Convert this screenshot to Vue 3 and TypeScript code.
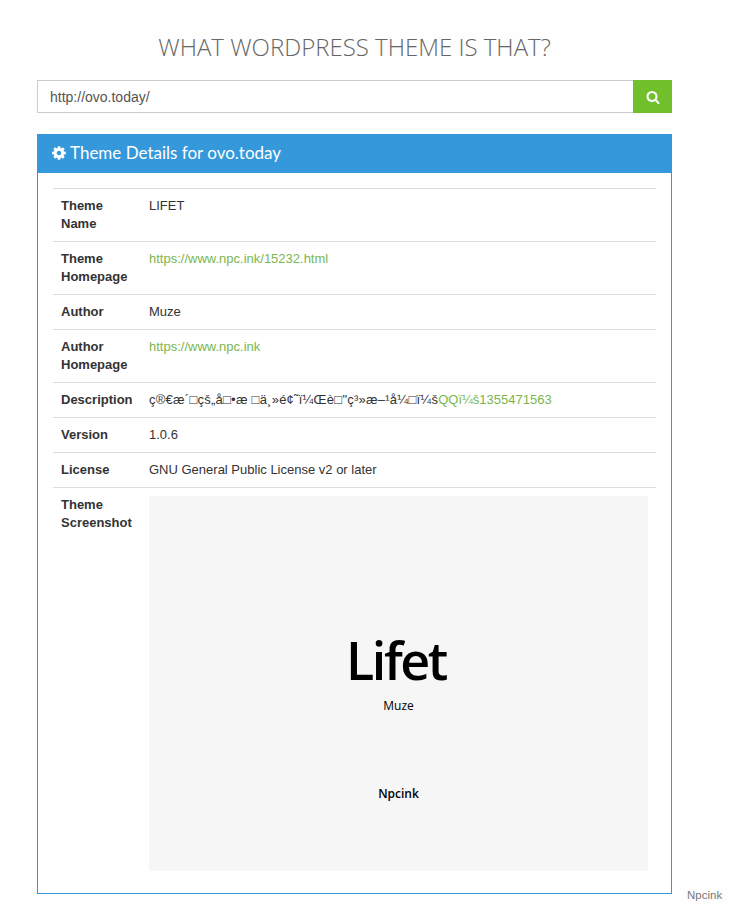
<template>
  <div class="page">
    <h1 class="title">WHAT WORDPRESS THEME IS THAT?</h1>

    <form class="search" @submit.prevent>
      <input v-model="url" class="search-input" type="text" />
      <button class="search-btn" type="submit" aria-label="Search">
        <svg class="search-icon" viewBox="0 0 1792 1792" fill="currentColor">
          <path d="M1216 832q0-185-131.5-316.5t-316.5-131.5-316.5 131.5-131.5 316.5 131.5 316.5 316.5 131.5 316.5-131.5 131.5-316.5zm512 832q0 52-38 90t-90 38q-54 0-90-38l-343-342q-179 124-399 124-143 0-273.5-55.5t-225-150-150-225-55.5-273.5 55.5-273.5 150-225 225-150 273.5-55.5 273.5 55.5 225 150 150 225 55.5 273.5q0 220-124 399l343 343q37 37 37 90z" />
        </svg>
      </button>
    </form>

    <section class="panel">
      <header class="panel-head">
        <svg class="gear" viewBox="0 0 1536 1792" fill="currentColor">
          <path d="M1024 896q0-106-75-181t-181-75-181 75-75 181 75 181 181 75 181-75 75-181zm512-109v222q0 12-8 23t-20 13l-185 28q-19 54-39 91 35 50 107 138 10 12 10 25t-9 23q-27 37-99 108t-94 71q-12 0-26-9l-138-108q-44 23-91 38-16 136-29 186-7 28-36 28h-222q-14 0-24.5-8.5t-11.5-21.5l-28-184q-49-16-90-37l-141 107q-10 9-25 9-14 0-25-11-126-114-165-168-7-10-7-23 0-12 8-23 15-21 51-66.5t54-70.5q-27-50-41-99l-183-27q-13-2-21-12.5t-8-23.5v-222q0-12 8-23t19-13l186-28q14-46 39-92-40-57-107-138-10-12-10-24 0-10 9-23 26-36 98.5-107.5t94.5-71.5q13 0 26 10l138 107q44-23 91-38 16-136 29-186 7-28 36-28h222q14 0 24.5 8.5t11.5 21.5l28 184q49 16 90 37l142-107q9-9 24-9 13 0 25 10 129 119 165 170 7 8 7 22 0 12-8 23-15 21-51 66.5t-54 70.5q26 50 41 98l183 28q13 2 21 12.5t8 23.5z" />
        </svg>
        <span>Theme Details for ovo.today</span>
      </header>

      <div class="panel-body">
        <table class="details">
          <tbody>
            <tr>
              <th>Theme Name</th>
              <td>LIFET</td>
            </tr>
            <tr>
              <th>Theme Homepage</th>
              <td><a href="#">https://www.npc.ink/15232.html</a></td>
            </tr>
            <tr>
              <th>Author</th>
              <td>Muze</td>
            </tr>
            <tr>
              <th>Author Homepage</th>
              <td><a href="#">https://www.npc.ink</a></td>
            </tr>
            <tr>
              <th>Description</th>
              <td><span class="garbled">{{ garbled }}</span><a href="#">{{ garbledQq }}</a></td>
            </tr>
            <tr>
              <th>Version</th>
              <td>1.0.6</td>
            </tr>
            <tr>
              <th>License</th>
              <td>GNU General Public License v2 or later</td>
            </tr>
            <tr>
              <th>Theme Screenshot</th>
              <td>
                <div class="shot">
                  <div class="shot-name">Lifet</div>
                  <div class="shot-author">Muze</div>
                  <div class="shot-site">Npcink</div>
                </div>
              </td>
            </tr>
          </tbody>
        </table>
      </div>
    </section>

    <span class="mark">Npcink</span>
  </div>
</template>

<script setup lang="ts">
import { ref } from 'vue'

const url = ref('http://ovo.today/')

// mojibake is part of the page, kept as it shows
const garbled = 'ç®€æ´□çš„å□•æ □ä¸»é¢˜ï¼Œè□"ç³»æ–¹å¼□ï¼š'
const garbledQq = 'QQï¼š1355471563'
</script>

<style scoped>
.page {
  position: relative;
  box-sizing: border-box;
  width: 732px;
  height: 911px;
  padding: 0 60px 0 37px;
  overflow: hidden;
  background: #fefefe;
  font-family: "Liberation Sans", Arial, sans-serif;
  font-size: 13px;
  line-height: 18px;
  color: #333;
}

.title {
  margin: 0;
  padding-top: 32px;
  height: 48px;
  font-family: "Open Sans", sans-serif;
  font-size: 24px;
  line-height: 30px;
  font-weight: 300;
  text-align: center;
  color: #666;
}

.search {
  display: flex;
  height: 33px;
}

.search-input {
  flex: 1;
  min-width: 0;
  box-sizing: border-box;
  height: 33px;
  padding: 0 12px;
  border: 1px solid #ccc;
  border-right: 0;
  border-radius: 0;
  outline: none;
  background: #fff;
  font-family: "Liberation Sans", Arial, sans-serif;
  font-size: 14px;
  color: #555;
}

.search-btn {
  display: flex;
  align-items: center;
  justify-content: center;
  width: 39px;
  height: 33px;
  padding: 0;
  border: 0;
  background: #72bf2c;
  color: #fff;
}

.search-icon {
  width: 14px;
  height: 14px;
}

.panel {
  margin-top: 21px;
}

.panel-head {
  display: flex;
  align-items: center;
  gap: 4px;
  height: 38px;
  padding: 0 0 1px 15px;
  background: #3498db;
  font-family: Lato, sans-serif;
  font-size: 17px;
  color: #fff;
}

.gear {
  width: 14px;
  height: 16px;
}

.panel-body {
  padding: 15px 15px 14px;
  border: 1px solid #3498db;
  border-top: 0;
  background: #fff;
}

.details {
  width: 100%;
  border-collapse: collapse;
}

.details th,
.details td {
  padding: 8px;
  border-top: 1px solid #ddd;
  vertical-align: top;
  text-align: left;
}

.details th {
  width: 72px;
  font-weight: 700;
}

.details a {
  color: #7ab650;
  text-decoration: none;
}

.garbled {
  letter-spacing: 0.24px;
}

.shot {
  display: flex;
  flex-direction: column;
  align-items: center;
  box-sizing: border-box;
  width: 499px;
  height: 375px;
  padding-top: 129px;
  background: #f6f6f6;
  font-family: "Open Sans", sans-serif;
  color: #000;
}

.shot-name {
  margin-right: 5px;
  font-size: 52px;
  line-height: 70px;
  font-weight: 600;
  letter-spacing: -2.4px;
}

.shot-author {
  margin-top: 2px;
  font-size: 12px;
  line-height: 18px;
  font-weight: 500;
}

.shot-site {
  margin-top: 70px;
  font-size: 12px;
  line-height: 18px;
  font-weight: 600;
}

.mark {
  position: absolute;
  left: 687px;
  top: 887px;
  font-size: 11.5px;
  line-height: 16px;
  color: #777;
}
</style>
